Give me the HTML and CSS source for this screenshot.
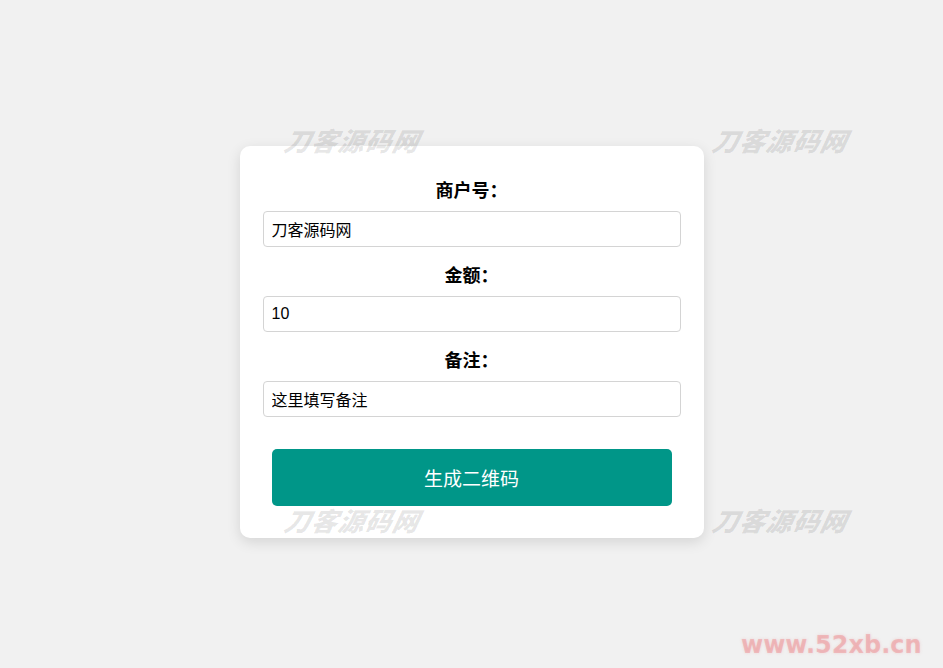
FILE: index.html
```html
<!DOCTYPE html>
<html lang="zh-CN">
<head>
<meta charset="utf-8">
<title>生成二维码</title>
<link rel="stylesheet" href="styles.css">
</head>
<body>
<div class="page">
  <form class="card">
    <div class="field">
      <label class="label" for="mid">商户号：</label>
      <input class="input" id="mid" type="text" value="刀客源码网">
    </div>
    <div class="field">
      <label class="label" for="amt">金额：</label>
      <input class="input" id="amt" type="text" value="10">
    </div>
    <div class="field">
      <label class="label" for="note">备注：</label>
      <input class="input" id="note" type="text" value="这里填写备注">
    </div>
    <button class="btn" type="button">生成二维码</button>
  </form>
</div>
<div class="wm wm-tl">刀客源码网</div>
<div class="wm wm-tr">刀客源码网</div>
<div class="wm wm-bl">刀客源码网</div>
<div class="wm wm-br">刀客源码网</div>
<div class="site">www.52xb.cn</div>
</body>
</html>
```
FILE: styles.css
```css
html, body {
  margin: 0;
  padding: 0;
}
body {
  background: #f1f1f1;
  font-family: "Liberation Sans", "Noto Sans CJK SC", sans-serif;
  color: #000;
  overflow: hidden;
}
.page {
  box-sizing: border-box;
  height: 100vh;
  padding-top: 16px;
  display: flex;
  justify-content: center;
  align-items: center;
}
.card {
  box-sizing: border-box;
  width: 464px;
  background: #fff;
  border-radius: 10px;
  box-shadow: 0 4px 14px rgba(0, 0, 0, 0.12);
  padding: 32px 23px 32px;
  display: flex;
  flex-direction: column;
}
.field {
  display: flex;
  flex-direction: column;
  margin-bottom: 16px;
}
.field:last-of-type {
  margin-bottom: 32px;
}
.label {
  text-align: center;
  font-size: 18px;
  font-weight: bold;
  line-height: 27px;
  margin-bottom: 6px;
}
.input {
  box-sizing: border-box;
  height: 36px;
  width: 100%;
  border: 1px solid #d4d4d4;
  border-radius: 4px;
  padding: 0 8px;
  font-family: "Liberation Sans", "Noto Sans CJK SC", sans-serif;
  font-size: 16px;
  color: #000;
  background: #fff;
  outline: none;
}
.btn {
  align-self: center;
  width: 400px;
  height: 57px;
  border: none;
  border-radius: 5px;
  background: #009688;
  color: #fff;
  font-family: "Liberation Sans", "Noto Sans CJK SC", sans-serif;
  font-size: 19px;
  cursor: pointer;
}
.wm {
  position: absolute;
  font-family: "Noto Sans CJK SC", sans-serif;
  font-weight: 900;
  font-style: italic;
  font-size: 26px;
  line-height: 30px;
  color: rgba(0, 0, 0, 0.1);
  letter-spacing: 1px;
  pointer-events: none;
  transform: skewX(-12deg);
}
.wm-tl { left: 285px; top: 125px; }
.wm-tr { left: 713px; top: 125px; }
.wm-bl { left: 285px; top: 505px; }
.wm-br { left: 713px; top: 505px; }
.site {
  position: absolute;
  left: 741px;
  top: 630px;
  font-family: "DejaVu Sans", sans-serif;
  font-weight: bold;
  font-size: 24px;
  line-height: 30px;
  color: rgba(235, 120, 125, 0.4);
  text-shadow: 0 0 3px rgba(235, 120, 125, 0.25);
  pointer-events: none;
}
```
